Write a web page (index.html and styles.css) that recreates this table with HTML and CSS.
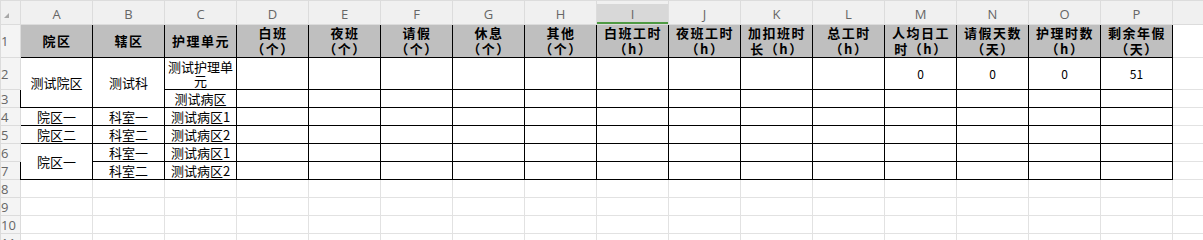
FILE: index.html
```html
<!DOCTYPE html>
<html lang="zh-CN">
<head>
<meta charset="utf-8">
<title>Sheet</title>
<link rel="stylesheet" href="styles.css">
</head>
<body>
<table class="sheet">
  <colgroup>
    <col class="c-rh">
    <col class="c"><col class="c"><col class="c"><col class="c">
    <col class="c"><col class="c"><col class="c"><col class="c">
    <col class="c"><col class="c"><col class="c"><col class="c">
    <col class="c"><col class="c"><col class="c"><col class="c">
    <col class="c">
  </colgroup>
  <tr class="r-col">
    <td class="corner"><span class="tri"></span></td>
    <td class="ch">A</td><td class="ch">B</td><td class="ch">C</td><td class="ch">D</td>
    <td class="ch">E</td><td class="ch">F</td><td class="ch">G</td><td class="ch">H</td>
    <td class="ch sel"><span class="sel-bg">I</span></td><td class="ch">J</td><td class="ch">K</td><td class="ch">L</td>
    <td class="ch">M</td><td class="ch">N</td><td class="ch">O</td><td class="ch">P</td>
    <td class="ch"></td>
  </tr>
  <tr class="r-h">
    <td class="rh">1</td>
    <td class="b hd">院区</td>
    <td class="b hd">辖区</td>
    <td class="b hd">护理单元</td>
    <td class="b hd">白班<br>（个）</td>
    <td class="b hd">夜班<br>（个）</td>
    <td class="b hd">请假<br>（个）</td>
    <td class="b hd">休息<br>（个）</td>
    <td class="b hd">其他<br>（个）</td>
    <td class="b hd">白班工时<br>（h）</td>
    <td class="b hd">夜班工时<br>（h）</td>
    <td class="b hd">加扣班时<br>长（h）</td>
    <td class="b hd">总工时<br>（h）</td>
    <td class="b hd">人均日工<br>时（h）</td>
    <td class="b hd">请假天数<br>（天）</td>
    <td class="b hd">护理时数<br>（h）</td>
    <td class="b hd">剩余年假<br>（天）</td>
    <td></td>
  </tr>
  <tr class="r-2">
    <td class="rh">2</td>
    <td class="b tx" rowspan="2">测试院区</td>
    <td class="b tx" rowspan="2">测试科</td>
    <td class="b tx wrap"><div class="wrapbox">测试护理单<br>元</div></td>
    <td class="b"></td><td class="b"></td><td class="b"></td><td class="b"></td>
    <td class="b"></td><td class="b"></td><td class="b"></td><td class="b"></td>
    <td class="b"></td>
    <td class="b num">0</td><td class="b num">0</td><td class="b num">0</td><td class="b num">51</td>
    <td></td>
  </tr>
  <tr class="r">
    <td class="rh">3</td>
    <td class="b tx">测试病区</td>
    <td class="b"></td><td class="b"></td><td class="b"></td><td class="b"></td>
    <td class="b"></td><td class="b"></td><td class="b"></td><td class="b"></td>
    <td class="b"></td><td class="b"></td><td class="b"></td><td class="b"></td>
    <td class="b"></td>
    <td></td>
  </tr>
  <tr class="r">
    <td class="rh">4</td>
    <td class="b tx">院区一</td>
    <td class="b tx">科室一</td>
    <td class="b tx">测试病区1</td>
    <td class="b"></td><td class="b"></td><td class="b"></td><td class="b"></td>
    <td class="b"></td><td class="b"></td><td class="b"></td><td class="b"></td>
    <td class="b"></td><td class="b"></td><td class="b"></td><td class="b"></td>
    <td class="b"></td>
    <td></td>
  </tr>
  <tr class="r">
    <td class="rh">5</td>
    <td class="b tx">院区二</td>
    <td class="b tx">科室二</td>
    <td class="b tx">测试病区2</td>
    <td class="b"></td><td class="b"></td><td class="b"></td><td class="b"></td>
    <td class="b"></td><td class="b"></td><td class="b"></td><td class="b"></td>
    <td class="b"></td><td class="b"></td><td class="b"></td><td class="b"></td>
    <td class="b"></td>
    <td></td>
  </tr>
  <tr class="r">
    <td class="rh">6</td>
    <td class="b tx" rowspan="2">院区一</td>
    <td class="b tx">科室一</td>
    <td class="b tx">测试病区1</td>
    <td class="b"></td><td class="b"></td><td class="b"></td><td class="b"></td>
    <td class="b"></td><td class="b"></td><td class="b"></td><td class="b"></td>
    <td class="b"></td><td class="b"></td><td class="b"></td><td class="b"></td>
    <td class="b"></td>
    <td></td>
  </tr>
  <tr class="r">
    <td class="rh">7</td>
    <td class="b tx">科室二</td>
    <td class="b tx">测试病区2</td>
    <td class="b"></td><td class="b"></td><td class="b"></td><td class="b"></td>
    <td class="b"></td><td class="b"></td><td class="b"></td><td class="b"></td>
    <td class="b"></td><td class="b"></td><td class="b"></td><td class="b"></td>
    <td class="b"></td>
    <td></td>
  </tr>
  <tr class="r">
    <td class="rh">8</td>
    <td></td><td></td><td></td><td></td><td></td><td></td><td></td><td></td>
    <td></td><td></td><td></td><td></td><td></td><td></td><td></td><td></td>
    <td></td>
  </tr>
  <tr class="r">
    <td class="rh">9</td>
    <td></td><td></td><td></td><td></td><td></td><td></td><td></td><td></td>
    <td></td><td></td><td></td><td></td><td></td><td></td><td></td><td></td>
    <td></td>
  </tr>
  <tr class="r">
    <td class="rh">10</td>
    <td></td><td></td><td></td><td></td><td></td><td></td><td></td><td></td>
    <td></td><td></td><td></td><td></td><td></td><td></td><td></td><td></td>
    <td></td>
  </tr>
  <tr class="r">
    <td class="rh">11</td>
    <td></td><td></td><td></td><td></td><td></td><td></td><td></td><td></td>
    <td></td><td></td><td></td><td></td><td></td><td></td><td></td><td></td>
    <td></td>
  </tr>
</table>
</body>
</html>
```

FILE: styles.css
```css
html, body {
  margin: 0;
  padding: 0;
  background: #ffffff;
  overflow: hidden;
}

.sheet {
  border-collapse: collapse;
  table-layout: fixed;
  width: 1244px;
  font-family: "Noto Sans CJK SC", "Noto Sans", sans-serif;
  font-size: 13px;
  color: #000;
}

.c-rh { width: 20px; }
.c { width: 72px; }

.sheet td {
  padding: 0;
  border: 1px solid #e2e2e2;
  text-align: center;
  vertical-align: middle;
  overflow: hidden;
  white-space: nowrap;
}

.r-col { height: 24px; }
.r-h { height: 32px; }
.r-2 { height: 32px; }
.r { height: 18px; }

/* column letters */
.sheet td.ch {
  background: #f0f0f0;
  border-color: #dcdcdc;
  font-family: "Open Sans", "Noto Sans", sans-serif;
  font-size: 13px;
  color: #666;
  line-height: 16px;
  padding-top: 2px;
}

.sheet td.corner {
  background: #f0f0f0;
  border-color: #dcdcdc;
  text-align: left;
  vertical-align: top;
  padding-left: 3px;
}

.tri {
  display: block;
  width: 0;
  height: 0;
  margin-top: 12px;
  border-left: 5px solid transparent;
  border-bottom: 5px solid #a8a8a8;
}

.sheet td.sel {
  padding: 0;
  vertical-align: bottom;
}

.sel-bg {
  display: block;
  height: 16px;
  padding-top: 2px;
  background: #d8d8d8;
  border-bottom: 2px solid #4f9a43;
}

/* row numbers */
.sheet td.rh {
  background: #f4f4f4;
  border-color: #dcdcdc;
  font-family: "Open Sans", "Noto Sans", sans-serif;
  font-size: 13px;
  color: #666;
  text-align: left;
  padding-left: 0;
  line-height: 14px;
}

/* bordered data table */
.sheet td.b {
  border: 1px solid #000;
}

.sheet td.hd {
  background: #bfbfbf;
  font-weight: 700;
  font-size: 13px;
  letter-spacing: 1.5px;
  line-height: 16px;
  padding-left: 1px;
}

.sheet td.tx {
  font-size: 13px;
  line-height: 14px;
}

.sheet td.wrap {
  vertical-align: top;
  padding-top: 2px;
  overflow: visible;
}

.wrapbox {
  height: 26px;
  line-height: 14px;
  overflow: visible;
}

.sheet td.num {
  font-size: 12px;
  line-height: 14px;
}
```
